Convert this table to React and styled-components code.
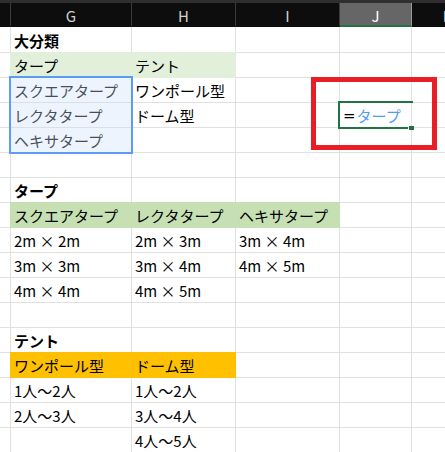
import React from "react";
import styled, { createGlobalStyle } from "styled-components";

const GlobalStyle = createGlobalStyle`
  html, body { margin: 0; padding: 0; background: #fff; overflow: hidden; }
  body { font-family: "Noto Sans CJK JP", "Noto Sans", sans-serif; }
`;

const Sheet = styled.div`
  position: relative;
  width: 445px;
  height: 452px;
  overflow: hidden;
  background: #fff;
`;

const TopBand = styled.div`
  height: 3px;
  background: #2f2f2f;
`;

const Grid = styled.div`
  display: grid;
  grid-template-columns: 11px 121px 104px 104px 72px 72px;
  grid-template-rows: 24px 26px repeat(16, 25px);
`;

const HeaderCell = styled.div`
  box-sizing: border-box;
  background: ${(p) => (p.$active ? "#666666" : "#0d0d0d")};
  border-right: 1px solid ${(p) => (p.$active ? "#9a9a9a" : "#3c3c3c")};
  border-bottom: 2px solid ${(p) => (p.$active ? "#217346" : "#0d0d0d")};
  color: ${(p) => (p.$active ? "#ffffff" : "#d2d2d2")};
  display: flex;
  align-items: center;
  justify-content: center;
  font-size: 15px;
  padding-top: 2px;
  overflow: hidden;
  white-space: nowrap;
`;

const Cell = styled.div`
  box-sizing: border-box;
  position: relative;
  background: ${(p) => p.$fill || "#fff"};
  border-right: 1px solid ${(p) => p.$fill || "#e1e1e1"};
  border-bottom: 1px solid ${(p) => p.$fill || "#e1e1e1"};
  box-shadow: ${(p) =>
    p.$fill ? `0 -1px 0 ${p.$fill}, -1px 0 0 ${p.$fill}, -1px -1px 0 ${p.$fill}` : "none"};
  display: flex;
  align-items: center;
  padding: 1px 3px 0;
  font-size: 15px;
  font-weight: ${(p) => (p.$bold ? 700 : 400)};
  color: #000;
  white-space: nowrap;
`;

const Eq = styled.span`
  color: #000;
  font-family: "DejaVu Sans", sans-serif;
  margin-right: 1px;
`;

const Ref = styled.span`
  color: #4f9cf5;
`;

const Selection = styled.div`
  position: absolute;
  left: 9px;
  top: 76px;
  width: 124px;
  height: 78px;
  box-sizing: border-box;
  border: 2px solid #5b9cf6;
  background: rgba(204, 224, 250, 0.35);
  pointer-events: none;
`;

const ActiveCell = styled.div`
  position: absolute;
  left: 338px;
  top: 101px;
  width: 75px;
  height: 28px;
  box-sizing: border-box;
  border-top: 2px solid #217346;
  pointer-events: none;
  &::before {
    content: "";
    position: absolute;
    left: 0;
    top: -2px;
    width: 2px;
    height: 28px;
    background: #217346;
  }
  &::after {
    content: "";
    position: absolute;
    left: 0;
    bottom: 0;
    width: 70px;
    height: 2px;
    background: #217346;
  }
`;

const FillHandle = styled.div`
  position: absolute;
  left: 409px;
  top: 126px;
  width: 5px;
  height: 4px;
  background: #217346;
  pointer-events: none;
`;

const Highlight = styled.div`
  position: absolute;
  left: 311px;
  top: 77px;
  width: 126px;
  height: 73px;
  box-sizing: border-box;
  border: 5px solid #e81d25;
  pointer-events: none;
`;

const LIGHT = "#e2efda";
const GREEN = "#c6e0b4";
const ORANGE = "#ffc000";

const rows = [
  [{ t: "大分類", bold: true }],
  [{ t: "タープ", fill: LIGHT }, { t: "テント", fill: LIGHT }],
  [{ t: "スクエアタープ" }, { t: "ワンポール型" }],
  [{ t: "レクタタープ" }, { t: "ドーム型" }, {}, { formula: true }],
  [{ t: "ヘキサタープ" }],
  [],
  [{ t: "タープ", bold: true }],
  [
    { t: "スクエアタープ", fill: GREEN },
    { t: "レクタタープ", fill: GREEN },
    { t: "ヘキサタープ", fill: GREEN },
  ],
  [{ t: "2m × 2m" }, { t: "2m × 3m" }, { t: "3m × 4m" }],
  [{ t: "3m × 3m" }, { t: "3m × 4m" }, { t: "4m × 5m" }],
  [{ t: "4m × 4m" }, { t: "4m × 5m" }],
  [],
  [{ t: "テント", bold: true }],
  [{ t: "ワンポール型", fill: ORANGE }, { t: "ドーム型", fill: ORANGE }],
  [{ t: "1人～2人" }, { t: "1人～2人" }],
  [{ t: "2人～3人" }, { t: "3人～4人" }],
  [{}, { t: "4人～5人" }],
];

const columns = ["", "G", "H", "I", "J", "K"];

export default function App() {
  return (
    <>
      <GlobalStyle />
      <Sheet lang="ja">
        <TopBand />
        <Grid>
          {columns.map((c) => (
            <HeaderCell key={"h" + c} $active={c === "J"}>
              {c}
            </HeaderCell>
          ))}
          {rows.map((row, r) =>
            [0, 1, 2, 3, 4, 5].map((ci) => {
              if (ci === 0) return <Cell key={r + "-0"} />;
              const cell = row[ci - 1] || {};
              return (
                <Cell key={r + "-" + ci} $fill={cell.fill} $bold={cell.bold}>
                  {cell.formula ? (
                    <>
                      <Eq>=</Eq>
                      <Ref>タープ</Ref>
                    </>
                  ) : (
                    cell.t
                  )}
                </Cell>
              );
            })
          )}
        </Grid>
        <Selection />
        <ActiveCell />
        <FillHandle />
        <Highlight />
      </Sheet>
    </>
  );
}
